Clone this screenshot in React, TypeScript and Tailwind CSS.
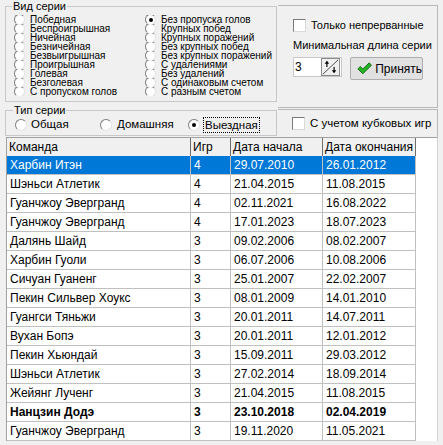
import React from "react";

const seriesLeft = [
  "Победная",
  "Беспроигрышная",
  "Ничейная",
  "Безничейная",
  "Безвыигрышная",
  "Проигрышная",
  "Голевая",
  "Безголевая",
  "С пропуском голов",
];

const seriesRight = [
  "Без пропуска голов",
  "Крупных побед",
  "Крупных поражений",
  "Без крупных побед",
  "Без крупных поражений",
  "С удалениями",
  "Без удалений",
  "С одинаковым счетом",
  "С разным счетом",
];

interface StreakRow {
  team: string;
  games: number;
  start: string;
  end: string;
  bold?: boolean;
}

const rows: StreakRow[] = [
  { team: "Харбин Итэн", games: 4, start: "29.07.2010", end: "26.01.2012" },
  { team: "Шэньси Атлетик", games: 4, start: "21.04.2015", end: "11.08.2015" },
  { team: "Гуанчжоу Эвергранд", games: 4, start: "02.11.2021", end: "16.08.2022" },
  { team: "Гуанчжоу Эвергранд", games: 4, start: "17.01.2023", end: "18.07.2023" },
  { team: "Далянь Шайд", games: 3, start: "09.02.2006", end: "08.02.2007" },
  { team: "Харбин Гуоли", games: 3, start: "06.07.2006", end: "10.08.2006" },
  { team: "Сичуан Гуаненг", games: 3, start: "25.01.2007", end: "22.02.2007" },
  { team: "Пекин Сильвер Хоукс", games: 3, start: "08.01.2009", end: "14.01.2010" },
  { team: "Гуангси Тяньжи", games: 3, start: "20.01.2011", end: "14.07.2011" },
  { team: "Вухан Бопэ", games: 3, start: "20.01.2011", end: "12.01.2012" },
  { team: "Пекин Хьюндай", games: 3, start: "15.09.2011", end: "29.03.2012" },
  { team: "Шэньси Атлетик", games: 3, start: "27.02.2014", end: "18.09.2014" },
  { team: "Жейянг Лученг", games: 3, start: "21.04.2015", end: "11.08.2015" },
  { team: "Нанцзин Додэ", games: 3, start: "23.10.2018", end: "02.04.2019", bold: true },
  { team: "Гуанчжоу Эвергранд", games: 3, start: "19.11.2020", end: "11.05.2021" },
];

const SELECTED = 0;

// small classic radio circle, clipped when rows are squeezed
const Circle: React.FC<{ checked?: boolean; small?: boolean }> = ({ checked, small }) => (
  <span
    className={`${
      small ? "w-[11px] h-[11px]" : "w-3 h-3"
    } shrink-0 rounded-full bg-white border border-t-[#7f7f7f] border-l-[#7f7f7f] border-r-[#e3e3e3] border-b-[#e3e3e3] flex items-center justify-center`}
  >
    {checked && <span className="w-[4px] h-[4px] rounded-full bg-black" />}
  </span>
);

const SeriesItem: React.FC<{ label: string; checked?: boolean }> = ({ label, checked }) => (
  <div className="flex items-center h-[9px] gap-[5px]">
    <span className="h-[9px] overflow-hidden flex items-center">
      <Circle small checked={checked} />
    </span>
    <span className="text-[10px] leading-[9px] whitespace-nowrap">{label}</span>
  </div>
);

const CheckBox: React.FC = () => (
  <span className="w-[13px] h-[13px] shrink-0 bg-white border border-t-[#7a7a7a] border-l-[#7a7a7a] border-r-[#dadada] border-b-[#dadada]" />
);

const SpinArrows = () => (
  <svg width="19" height="18" viewBox="0 0 19 18">
    <line x1="1" y1="17" x2="18" y2="1" stroke="#3c3c3c" strokeWidth="1" />
    <line x1="5.5" y1="3" x2="5.5" y2="9" stroke="#000" strokeWidth="1.3" />
    <path d="M3 5.5 L5.5 2 L8 5.5 Z" fill="#000" />
    <line x1="13.5" y1="9" x2="13.5" y2="15" stroke="#000" strokeWidth="1.3" />
    <path d="M11 12.5 L13.5 16 L16 12.5 Z" fill="#000" />
  </svg>
);

const CheckMark = () => (
  <svg width="18" height="15" viewBox="0 0 18 15">
    <path d="M1 8 L4 5 L7 8 L14.5 0.8 L17.2 3.6 L7 13.8 Z" fill="#21b321" stroke="#0b5e0b" strokeWidth="1" strokeLinejoin="round" />
  </svg>
);

const colWidths = ["w-[184px]", "w-[40px]", "w-[92px]", "w-[93px]"];
const headers = ["Команда", "Игр", "Дата начала", "Дата окончания"];

export default function App() {
  return (
    <div className="w-[443px] h-[445px] bg-[#f0f0f0] text-black font-['Liberation_Sans',Arial,sans-serif] overflow-hidden">
      <div className="flex h-[137px]">
        {/* left column: group boxes */}
        <div className="ml-[5px] w-[272px] flex flex-col">
          <fieldset className="h-[102px] border border-[#c8c8c8]">
            <legend className="ml-[6px] px-[1px] text-[11px] leading-[12px]">Вид серии</legend>
            <div className="flex pt-[3px] pl-[8px]">
              <div className="w-[131px] flex flex-col">
                {seriesLeft.map((s) => (
                  <SeriesItem key={s} label={s} />
                ))}
              </div>
              <div className="flex flex-col">
                {seriesRight.map((s, i) => (
                  <SeriesItem key={s} label={s} checked={i === 0} />
                ))}
              </div>
            </div>
          </fieldset>
          <fieldset className="mt-[2px] h-[32px] border border-[#c8c8c8]">
            <legend className="ml-[7px] px-[1px] text-[11px] leading-[12px]">Тип серии</legend>
            <div className="flex items-center h-[18px] pl-[9px] text-[11.5px]">
              <div className="w-[85px] flex items-center gap-[4px]">
                <Circle />
                <span>Общая</span>
              </div>
              <div className="w-[88px] flex items-center gap-[5px]">
                <Circle />
                <span>Домашняя</span>
              </div>
              <div className="flex items-center gap-[3px]">
                <Circle checked />
                <span className="border border-dotted border-black px-[1px] leading-[14px]">Выездная</span>
              </div>
            </div>
          </fieldset>
        </div>

        {/* right column: options */}
        <div className="ml-[1px] w-[160px] pt-[5px] flex flex-col">
          <div className="h-[103px] border-t border-r border-b border-[#b9b9b9] pl-[15px] text-[11px]">
            <div className="mt-[12px] h-[14px] flex items-center gap-[5px]">
              <CheckBox />
              <span className="whitespace-nowrap">Только непрерванные</span>
            </div>
            <div className="mt-[6px] h-[14px] leading-[14px] whitespace-nowrap">Минимальная длина серии</div>
            <div className="mt-[5px] flex items-start">
              <div className="w-[49px] h-[20px] flex bg-white border border-[#c8c8c8] text-[12px]">
                <span className="w-[27px] pl-[1px] leading-[18px]">3</span>
                <span className="w-[19px] h-[18px] bg-[#f0f0f0] border border-[#8a8a8a] flex items-center justify-center">
                  <SpinArrows />
                </span>
              </div>
              <button className="ml-[8px] w-[73px] h-[23px] flex items-center gap-[3px] pl-[6px] bg-[#e1e1e1] border border-[#adadad] rounded-[2px] text-[12px]">
                <CheckMark />
                <span>Принять</span>
              </button>
            </div>
          </div>
          <div className="mt-[1px] h-[28px] border-t border-r border-[#b9b9b9] pl-[14px] flex items-center gap-[5px] text-[11.5px]">
            <CheckBox />
            <span className="whitespace-nowrap">С учетом кубковых игр</span>
          </div>
        </div>
      </div>

      {/* results grid */}
      <div className="ml-[6px] w-[432px] bg-white border-t border-l border-r border-t-[#a0a0a0] border-l-[#a0a0a0] border-r-[#d4d4d4] text-[12px]">
        <div className="flex h-[18px]">
          {headers.map((h, i) => (
            <div
              key={h}
              className={`${colWidths[i]} bg-[#f0f0f0] border-r border-[#6e6e6e] pl-[2px] leading-[18px] whitespace-nowrap`}
            >
              {h}
            </div>
          ))}
        </div>
        {rows.map((r, idx) => {
          const sel = idx === SELECTED;
          const cells = [r.team, String(r.games), r.start, r.end];
          return (
            <div key={idx} className={`flex h-[19px] ${r.bold ? "font-bold" : ""}`}>
              {cells.map((c, i) => (
                <div
                  key={i}
                  className={`${colWidths[i]} border-r border-b border-[#c0c0c0] pl-[3px] leading-[18px] whitespace-nowrap ${
                    sel ? "bg-[#0078d7] text-white" : ""
                  }`}
                >
                  {c}
                </div>
              ))}
            </div>
          );
        })}
      </div>
    </div>
  );
}
